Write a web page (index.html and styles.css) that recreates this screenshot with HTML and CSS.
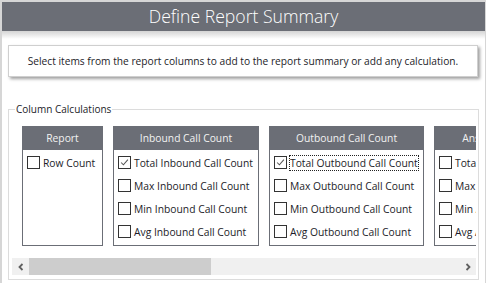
FILE: index.html
```html
<!DOCTYPE html>
<html lang="en">
<head>
    <meta charset="UTF-8">
    <title>Define Report Summary</title>
    <link rel="stylesheet" href="styles.css">
</head>
<body>
    <div class="window">
        <div class="title-bar">Define Report Summary</div>
        <div class="title-shadow"></div>

        <div class="info-box">Select items from the report columns to add to the report summary or add any calculation.</div>

        <fieldset class="calc-group">
            <legend>Column Calculations</legend>
            <div class="scroll-area">
                <div class="cards">
                    <div class="card card-report">
                        <div class="card-head">Report</div>
                        <div class="card-body">
                            <label class="item"><span class="box"></span>Row Count</label>
                        </div>
                    </div>

                    <div class="card card-inbound">
                        <div class="card-head">Inbound Call Count</div>
                        <div class="card-body">
                            <label class="item"><span class="box checked"><svg viewBox="0 0 13 13"><path d="M2.5 6.5 L5.2 9.2 L10.5 3.2"/></svg></span>Total Inbound Call Count</label>
                            <label class="item"><span class="box"></span>Max Inbound Call Count</label>
                            <label class="item"><span class="box"></span>Min Inbound Call Count</label>
                            <label class="item"><span class="box"></span>Avg Inbound Call Count</label>
                        </div>
                    </div>

                    <div class="card card-outbound">
                        <div class="card-head">Outbound Call Count</div>
                        <div class="card-body">
                            <label class="item"><span class="box checked"><svg viewBox="0 0 13 13"><path d="M2.5 6.5 L5.2 9.2 L10.5 3.2"/></svg></span><span class="focus">Total Outbound Call Count</span></label>
                            <label class="item"><span class="box"></span>Max Outbound Call Count</label>
                            <label class="item"><span class="box"></span>Min Outbound Call Count</label>
                            <label class="item"><span class="box"></span>Avg Outbound Call Count</label>
                        </div>
                    </div>

                    <div class="card card-answered">
                        <div class="card-head">Answered Call Count</div>
                        <div class="card-body">
                            <label class="item"><span class="box"></span>Total Answered Call Count</label>
                            <label class="item"><span class="box"></span>Max Answered Call Count</label>
                            <label class="item"><span class="box"></span>Min Answered Call Count</label>
                            <label class="item"><span class="box"></span>Avg Answered Call Count</label>
                        </div>
                    </div>
                </div>

                <div class="hscroll">
                    <div class="arrow">
                        <svg viewBox="0 0 16 16"><path d="M10 4 L6 8 L10 12"/></svg>
                    </div>
                    <div class="track">
                        <div class="thumb"></div>
                    </div>
                    <div class="arrow">
                        <svg viewBox="0 0 16 16"><path d="M6 4 L10 8 L6 12"/></svg>
                    </div>
                </div>
            </div>
        </fieldset>
    </div>
</body>
</html>
```

FILE: styles.css
```css
body {
    margin: 0;
    padding: 0;
    background-color: #ffffff;
    font-family: "Open Sans", "Noto Sans", sans-serif;
    font-size: 10.3px;
    color: #1c1c28;
}

.window {
    width: 483px;
    height: 281px;
    margin: 0 2px 0 0;
    border: 1px solid #d6d6d6;
    border-left-width: 2px;
    border-top-width: 2px;
    box-sizing: content-box;
    overflow: hidden;
}

.title-bar {
    height: 29px;
    background-color: #6b6e76;
    color: #ffffff;
    font-size: 17.6px;
    font-weight: 300;
    line-height: 29px;
    text-align: center;
}

.title-shadow {
    height: 8px;
    background: linear-gradient(#d4d4d4, #ffffff);
}

/* bandeau d'aide */
.info-box {
    margin: 6px 7px 0 6px;
    height: 30px;
    line-height: 30px;
    border: 1px solid #cfcfcf;
    background-color: #ffffff;
    box-shadow: 2px 2px 3px #a0a0a0;
    text-align: center;
    font-size: 10.2px;
    white-space: nowrap;
}

.calc-group {
    min-width: 0;
    margin: 25px 6px 0 6px;
    padding: 10px 3px 4px 3px;
    border: 1px solid #dcdcdc;
}

.calc-group legend {
    padding: 0 1px;
    margin-left: 3px;
    font-size: 10px;
}

.scroll-area {
    width: 464px;
    margin-top: -2px;
    overflow: hidden;
}

.cards {
    display: flex;
    gap: 10px;
    padding: 2px 0 0 10px;
    height: 121px;
    overflow: hidden;
}

.card {
    flex: none;
    height: 118px;
    border: 1px solid #6b6e76;
    background-color: #ffffff;
    overflow: hidden;
}

.card-report { width: 79px; }
.card-inbound { width: 144px; }
.card-outbound { width: 153px; }
.card-answered { width: 154px; }

.card-head {
    height: 23px;
    line-height: 23px;
    background-color: #6b6e76;
    color: #f2f2f2;
    text-align: center;
    white-space: nowrap;
    overflow: hidden;
}

.card-body {
    padding-top: 1px;
}

.item {
    display: flex;
    align-items: center;
    height: 23px;
    padding-left: 4px;
    white-space: nowrap;
}

.box {
    flex: none;
    width: 11px;
    height: 11px;
    border: 1px solid #333333;
    margin-right: 3px;
    background-color: #ffffff;
}

.box svg {
    display: block;
    width: 11px;
    height: 11px;
}

.box svg path {
    fill: none;
    stroke: #555555;
    stroke-width: 1.2;
}

.focus {
    outline: 1px dotted #222222;
}

.hscroll {
    display: flex;
    height: 17px;
    margin-top: 11px;
    background-color: #f0f0f0;
}

.arrow {
    width: 17px;
    display: flex;
    align-items: center;
    justify-content: center;
}

.arrow svg {
    width: 12px;
    height: 12px;
}

.arrow svg path {
    fill: none;
    stroke: #606060;
    stroke-width: 2.4;
}

.track {
    flex: 1;
}

.thumb {
    width: 182px;
    height: 17px;
    background-color: #cdcdcd;
}
```
